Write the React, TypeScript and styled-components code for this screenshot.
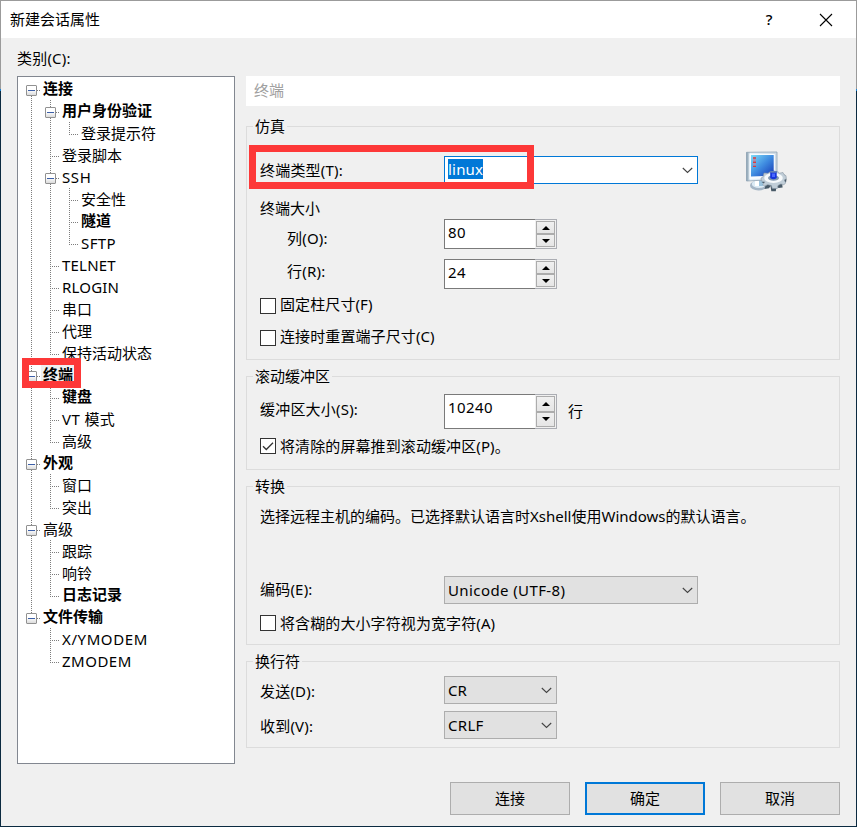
import React from "react";
import styled, { createGlobalStyle, css } from "styled-components";

const GlobalStyle = createGlobalStyle`
  * { box-sizing: border-box; }
  body {
    margin: 0;
    background: #0b2a40;
    color: #000;
    font: 15px/20px "Noto Sans", "Noto Sans CJK SC", sans-serif;
  }
  button { font: inherit; color: inherit; margin: 0; }
`;

const Dialog = styled.div`
  position: relative;
  width: 857px;
  height: 827px;
  padding: 1px;
  background: linear-gradient(#9b9b9b 0 89px, #1883d7 89px 91px, #0b2a40 91px);
  overflow: hidden;
`;

const Surface = styled.div`
  height: 825px;
  background: #f0f0f0;
`;

const TitleBar = styled.header`
  display: flex;
  align-items: center;
  height: 37px;
  padding: 0 23px 0 9px;
  background: #fff;
`;

const Title = styled.span`
  flex: 1;
  padding-bottom: 2px;
  white-space: nowrap;
`;

const HelpMark = styled.span`
  width: 12px;
  margin-right: 44px;
  padding-bottom: 2px;
  text-align: center;
  font-weight: 500;
`;

const Body = styled.div`
  display: grid;
  grid-template-columns: 218px 594px;
  column-gap: 11px;
  padding: 10px 0 0 16px;
`;

const CategoryLabel = styled.div`
  grid-column: 1 / -1;
  height: 28px;
  line-height: 20px;
  letter-spacing: 0.2px;
`;

const Tree = styled.div`
  height: 688px;
  padding: 1px 0 0 4px;
  border: 1px solid #828790;
  background: #fff;
`;

const TreeRow = styled.div`
  display: flex;
  height: 22px;
`;

type CellKind = "blank" | "line" | "tee" | "end" | "start";

const vertical = "repeating-linear-gradient(to bottom, #7d7d7d 0 1px, transparent 1px 2px)";
const horizontal = "repeating-linear-gradient(to right, #7d7d7d 0 1px, transparent 1px 2px)";

const cellLines: Record<CellKind, string> = {
  blank: "none",
  line: `${vertical} 9px 0 / 1px 22px no-repeat`,
  tee: `${vertical} 9px 0 / 1px 22px no-repeat, ${horizontal} 11px 12px / 7px 1px no-repeat`,
  end: `${vertical} 9px 0 / 1px 13px no-repeat, ${horizontal} 11px 12px / 7px 1px no-repeat`,
  start: `${vertical} 9px 12px / 1px 10px no-repeat, ${horizontal} 11px 12px / 7px 1px no-repeat`,
};

const TreeCell = styled.span<{ $kind: CellKind }>`
  flex: none;
  width: 19px;
  height: 22px;
  padding: 7px 0 0 4px;
  background: ${(p) => cellLines[p.$kind]};
`;

const Expander = styled.span`
  display: flex;
  align-items: center;
  justify-content: center;
  width: 11px;
  height: 11px;
  border: 1px solid #919191;
  border-radius: 1px;
  background: linear-gradient(#fff 40%, #dcdcdc);
  &::after {
    content: "";
    width: 7px;
    height: 1px;
    background: #3c5fa8;
  }
`;

const NodeText = styled.span<{ $bold?: boolean; $selected?: boolean; $tracking?: number }>`
  height: 22px;
  padding: 0 2px;
  line-height: ${(p) => (p.$bold ? 21 : 23)}px;
  letter-spacing: ${(p) => p.$tracking ?? 0}px;
  white-space: nowrap;
  font-weight: ${(p) => (p.$bold ? 700 : 400)};
  background: ${(p) => (p.$selected ? "#f0f0f0" : "transparent")};
`;

const PanelHeading = styled.div`
  height: 30px;
  margin-bottom: 20px;
  padding-left: 8px;
  line-height: 29px;
  background: #fff;
  color: #a0a0a0;
`;

const Group = styled.section<{ $height: number }>`
  height: ${(p) => p.$height}px;
  margin-bottom: 16px;
  padding: 0 6px;
  border: 1px solid #dcdcdc;
`;

const GroupTitle = styled.h2`
  width: max-content;
  height: 20px;
  margin: -11px 0 0;
  padding: 0 2px;
  font-size: 15px;
  font-weight: 400;
  line-height: 20px;
  background: #f0f0f0;
`;

const Row = styled.div<{ $top: number; $height: number }>`
  display: flex;
  align-items: center;
  height: ${(p) => p.$height}px;
  margin-top: ${(p) => p.$top}px;
  padding-left: 7px;
  white-space: nowrap;
`;

const Label = styled.label<{ $indent?: boolean; $drop?: number; $rise?: number }>`
  width: 184px;
  padding-left: ${(p) => (p.$indent ? 27 : 0)}px;
  padding-top: ${(p) => p.$drop ?? 0}px;
  padding-bottom: ${(p) => p.$rise ?? 0}px;
  letter-spacing: 0.2px;
`;

const Combo = styled.div<{ $width: number; $active?: boolean }>`
  display: flex;
  align-items: center;
  justify-content: space-between;
  width: ${(p) => p.$width}px;
  height: 28px;
  padding: 0 4px 0 3px;
  border: 1px solid ${(p) => (p.$active ? "#0078d7" : "#adadad")};
  background: ${(p) => (p.$active ? "#fff" : "#e1e1e1")};
`;

const ComboText = styled.span<{ $tracking?: number }>`
  letter-spacing: ${(p) => p.$tracking ?? 0}px;
`;

const Selection = styled.span`
  height: 20px;
  margin-top: -2px;
  background: #0078d7;
  color: #fff;
  letter-spacing: 0.2px;
`;

const TerminalIcon = styled.svg`
  margin: 2px 0 0 48px;
`;

const SpinBox = styled.div<{ $height: number }>`
  display: flex;
  width: 113px;
  height: ${(p) => p.$height}px;
`;

const SpinValue = styled.span`
  width: 91px;
  padding: 2px 0 0 3px;
  border: 1px solid #7a7a7a;
  border-right: 0;
  background: #fff;
  letter-spacing: 0.4px;
`;

const SpinButtons = styled.span`
  display: grid;
  grid-template-rows: 1fr 1fr;
  width: 22px;
  padding: 1px;
  border: 1px solid #abadb3;
  border-left: 0;
`;

const SpinButton = styled.span<{ $down?: boolean }>`
  display: flex;
  align-items: center;
  justify-content: center;
  border: 1px solid #acacac;
  background: linear-gradient(#f0f0f0, #e5e5e5);
  &::after {
    content: "";
    border: 4px solid transparent;
    ${(p) =>
      p.$down
        ? css`border-top-color: #000; border-bottom-width: 0;`
        : css`border-bottom-color: #000; border-top-width: 0;`}
  }
`;

const Unit = styled.span`
  margin-left: 11px;
  padding-bottom: 2px;
`;

const CheckMark = styled.span`
  display: flex;
  width: 16px;
  height: 16px;
  margin-right: 4px;
  border: 1px solid #333;
  background: #fff;
`;

const CheckText = styled.span<{ $rise: number }>`
  margin-top: -${(p) => p.$rise}px;
  letter-spacing: 0.1px;
`;

const Actions = styled.footer`
  display: flex;
  justify-content: flex-end;
  gap: 15px;
  padding: 18px 16px 0 0;
`;

const ActionButton = styled.button<{ $primary?: boolean }>`
  width: 120px;
  height: 33px;
  padding: 0 0 2px;
  border: ${(p) => (p.$primary ? "2px solid #0078d7" : "1px solid #adadad")};
  background: #e1e1e1;
`;

const Highlight = styled.div<{ $x: number; $y: number; $w: number; $h: number }>`
  position: absolute;
  left: ${(p) => p.$x}px;
  top: ${(p) => p.$y}px;
  width: ${(p) => p.$w}px;
  height: ${(p) => p.$h}px;
  border: 7px solid #fd3838;
  pointer-events: none;
`;

type Node = {
  text: string;
  cells: CellKind[];
  bold?: boolean;
  open?: boolean;
  selected?: boolean;
  tracking?: number;
};

const nodes: Node[] = [
  { text: "连接", cells: ["start"], bold: true, open: true },
  { text: "用户身份验证", cells: ["line", "tee"], bold: true, open: true },
  { text: "登录提示符", cells: ["line", "line", "end"] },
  { text: "登录脚本", cells: ["line", "tee"] },
  { text: "SSH", cells: ["line", "tee"], open: true, tracking: 0.6 },
  { text: "安全性", cells: ["line", "line", "tee"] },
  { text: "隧道", cells: ["line", "line", "tee"], bold: true },
  { text: "SFTP", cells: ["line", "line", "end"], tracking: 0.4 },
  { text: "TELNET", cells: ["line", "tee"], tracking: 0.2 },
  { text: "RLOGIN", cells: ["line", "tee"], tracking: 0.2 },
  { text: "串口", cells: ["line", "tee"] },
  { text: "代理", cells: ["line", "tee"] },
  { text: "保持活动状态", cells: ["line", "end"] },
  { text: "终端", cells: ["tee"], bold: true, open: true, selected: true },
  { text: "键盘", cells: ["line", "tee"], bold: true },
  { text: "VT 模式", cells: ["line", "tee"], tracking: 0.4 },
  { text: "高级", cells: ["line", "end"] },
  { text: "外观", cells: ["tee"], bold: true, open: true },
  { text: "窗口", cells: ["line", "tee"] },
  { text: "突出", cells: ["line", "end"] },
  { text: "高级", cells: ["tee"], open: true },
  { text: "跟踪", cells: ["line", "tee"] },
  { text: "响铃", cells: ["line", "tee"] },
  { text: "日志记录", cells: ["line", "end"], bold: true },
  { text: "文件传输", cells: ["end"], bold: true, open: true },
  { text: "X/YMODEM", cells: ["blank", "tee"], tracking: 0.6 },
  { text: "ZMODEM", cells: ["blank", "end"], tracking: 0.5 },
];

const Chevron = () => (
  <svg width="11" height="7" viewBox="0 0 11 7" fill="none">
    <path d="M.8 1 5.5 5.5 10.2 1" stroke="#444" strokeWidth="1.1" />
  </svg>
);

const Spinner = ({ value, height = 30 }: { value: string; height?: number }) => (
  <SpinBox $height={height}>
    <SpinValue>{value}</SpinValue>
    <SpinButtons>
      <SpinButton />
      <SpinButton $down />
    </SpinButtons>
  </SpinBox>
);

const Check = ({ top, text, on, rise = 2 }: { top: number; text: string; on?: boolean; rise?: number }) => (
  <Row $top={top} $height={16}>
    <CheckMark>
      {on && (
        <svg width="14" height="14" viewBox="0 0 14 14" fill="none">
          <path d="M2 7.2 5.3 10.5 12 3.8" stroke="#333" strokeWidth="1.3" />
        </svg>
      )}
    </CheckMark>
    <CheckText $rise={rise}>{text}</CheckText>
  </Row>
);

const MonitorGear = () => (
  <TerminalIcon width="41" height="41" viewBox="0 0 41 41">
    <defs>
      <linearGradient id="screen" x1="0" y1="0" x2="1" y2="1">
        <stop offset="0" stopColor="#7fdcf8" />
        <stop offset=".5" stopColor="#3f8be0" />
        <stop offset="1" stopColor="#1437b4" />
      </linearGradient>
      <linearGradient id="bezel" x1="0" y1="0" x2="1" y2="0">
        <stop offset="0" stopColor="#7f97a8" />
        <stop offset=".12" stopColor="#e9f3fa" />
        <stop offset="1" stopColor="#cfdae4" />
      </linearGradient>
    </defs>
    <ellipse cx="12.5" cy="34.5" rx="8.5" ry="5" fill="#a5b6c6" />
    <ellipse cx="13" cy="33" rx="7.2" ry="4" fill="#dcebf5" />
    <path d="M9 29h4v6H9z" fill="#fff" />
    <path d="M13 29h4v6h-4z" fill="#9cc4de" />
    <path d="M.5 1.3 31 1v27.5L.5 30z" fill="url(#bezel)" stroke="#8da1b2" strokeWidth=".8" />
    <path d="M3.5 3h25.3v24l-25.3 1z" fill="#f8fcff" />
    <path d="M5 4h22.7v20.5L5 25.5z" fill="url(#screen)" />
    <path d="M7 7h3M7 11.2h3M7 15.4h3" stroke="#e03838" strokeWidth="1.4" />
    <path d="M7 9.1h3M7 13.3h3" stroke="#b08cae" strokeWidth="1.6" />
    <path
      d="M15.5 31.5l4.5 1.5-1.5 5 4.5-.8 1.5-2.2.8 5.3h4.5l.8-5 2 1.8 4-.5-.5-4.6 4-1 .4-3-2-1.5v-3z"
      fill="#475967"
    />
    <path
      d="M18 22l4 .3 2-1.5 4-.5 4 .5 1.5 1.4 3.5-.7 1 2.2 2 1 .3 3-2 1.3 1.5 3-2 1.7-3-.7-2.8 1.5-.7 3h-5l-1-3-3.5-.8-3.5 1.5-1.5-1.7 2-2.5-3.5-1-.3-3 2-1z"
      fill="#c1ced8"
      stroke="#8796a2"
      strokeWidth=".6"
    />
    <ellipse cx="27.5" cy="27" rx="9.3" ry="5" fill="#f6f9fb" />
    <ellipse cx="27.5" cy="27" rx="5.5" ry="2.8" fill="#8398b0" />
    <path d="M24.2 20.5q3.2-1.5 6.5 0V27q-3.3 2.5-6.5 0z" fill="#1736dc" />
    <path d="M26 22.5h3v3.5h-3z" fill="#4a66ff" />
    <path d="M24.2 20h6.5v1.7h-6.5z" fill="#6482b8" />
  </TerminalIcon>
);

export default function App() {
  return (
    <Dialog>
      <GlobalStyle />
      <Surface>
        <TitleBar>
          <Title>新建会话属性</Title>
          <HelpMark>?</HelpMark>
          <svg width="14" height="14" viewBox="0 0 14 14">
            <path d="M1 1l12 12M13 1 1 13" stroke="#000" strokeWidth="1.1" />
          </svg>
        </TitleBar>
        <Body>
          <CategoryLabel>类别(C):</CategoryLabel>
          <Tree>
            {nodes.map((n, i) => (
              <TreeRow key={i}>
                {n.cells.map((kind, c) => (
                  <TreeCell key={c} $kind={kind}>
                    {n.open && c === n.cells.length - 1 && <Expander />}
                  </TreeCell>
                ))}
                <NodeText $bold={n.bold} $selected={n.selected} $tracking={n.tracking}>
                  {n.text}
                </NodeText>
              </TreeRow>
            ))}
          </Tree>
          <main>
            <PanelHeading>终端</PanelHeading>
            <Group $height={234}>
              <GroupTitle>仿真</GroupTitle>
              <Row $top={14} $height={40}>
                <Label>终端类型(T):</Label>
                <Combo $width={254} $active>
                  <Selection>linux</Selection>
                  <Chevron />
                </Combo>
                <MonitorGear />
              </Row>
              <Row $top={8} $height={20}>终端大小</Row>
              <Row $top={1} $height={30}>
                <Label $indent $drop={7}>列(O):</Label>
                <Spinner value="80" />
              </Row>
              <Row $top={10} $height={30}>
                <Label $indent $rise={6}>行(R):</Label>
                <Spinner value="24" />
              </Row>
              <Check top={9} text="固定柱尺寸(F)" rise={4} />
              <Check top={16} text="连接时重置端子尺寸(C)" rise={4} />
            </Group>
            <Group $height={94}>
              <GroupTitle>滚动缓冲区</GroupTitle>
              <Row $top={8} $height={35}>
                <Label $rise={5}>缓冲区大小(S):</Label>
                <Spinner value="10240" height={35} />
                <Unit>行</Unit>
              </Row>
              <Check top={9} text="将清除的屏幕推到滚动缓冲区(P)。" on rise={1} />
            </Group>
            <Group $height={159}>
              <GroupTitle>转换</GroupTitle>
              <Row $top={10} $height={20}>
                选择远程主机的编码。已选择默认语言时Xshell使用Windows的默认语言。
              </Row>
              <Row $top={50} $height={28}>
                <Label $rise={2}>编码(E):</Label>
                <Combo $width={254}>
                  <ComboText $tracking={0.4}>Unicode (UTF-8)</ComboText>
                  <Chevron />
                </Combo>
              </Row>
              <Check top={11} text="将含糊的大小字符视为宽字符(A)" rise={1} />
            </Group>
            <Group $height={87}>
              <GroupTitle>换行符</GroupTitle>
              <Row $top={5} $height={28}>
                <Label $drop={2}>发送(D):</Label>
                <Combo $width={113}>
                  <ComboText>CR</ComboText>
                  <Chevron />
                </Combo>
              </Row>
              <Row $top={7} $height={28}>
                <Label $drop={2}>收到(V):</Label>
                <Combo $width={113}>
                  <ComboText $tracking={0.3}>CRLF</ComboText>
                  <Chevron />
                </Combo>
              </Row>
            </Group>
          </main>
        </Body>
        <Actions>
          <ActionButton>连接</ActionButton>
          <ActionButton $primary>确定</ActionButton>
          <ActionButton>取消</ActionButton>
        </Actions>
      </Surface>
      <Highlight $x={249} $y={145} $w={285} $h={44} />
      <Highlight $x={22} $y={358} $w={59} $h={30} />
    </Dialog>
  );
}
